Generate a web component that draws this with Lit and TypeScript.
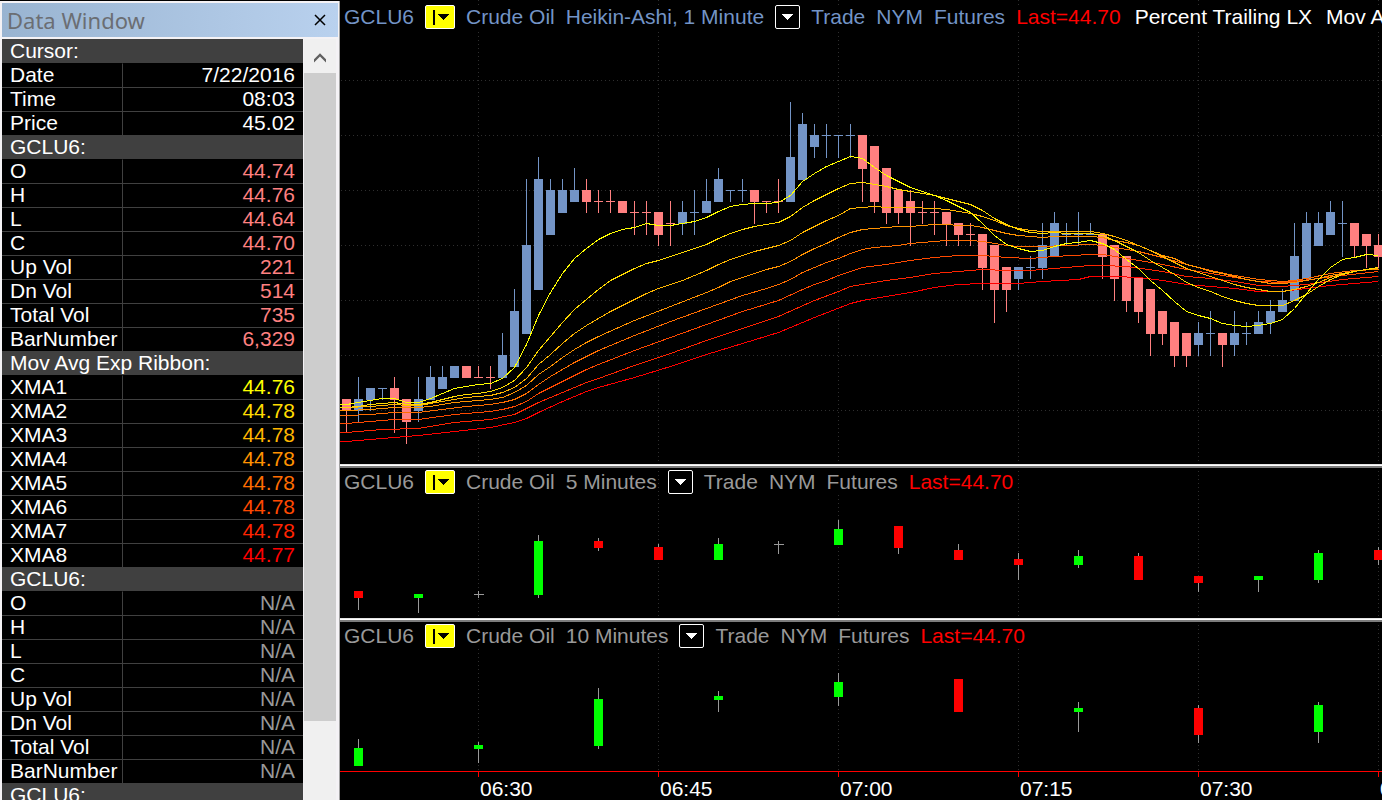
import { LitElement, html, svg, css } from "lit";
import { customElement, property } from "lit/decorators.js";

type Bar = [string, number, number, number, number];
type Point = [number, number];

const TEXT_WHITE = "#ffffff";
const SALMON = "#ff8080";
const STEEL = "#7394c6";
const RIBBON = ["#ffff00", "#ffdb00", "#ffb600", "#ff9200", "#ff6d00", "#ff4900", "#ff2400", "#ff0000"];
const GRID = "#2e2e2e";

interface Section {
  title: string;
  rows: [string, string, string][];
}

const QUOTE_FIELDS = ["O", "H", "L", "C", "Up Vol", "Dn Vol", "Total Vol", "BarNumber"];

const SECTIONS: Section[] = [
  {
    title: "Cursor:",
    rows: [
      ["Date", "7/22/2016", TEXT_WHITE],
      ["Time", "08:03", TEXT_WHITE],
      ["Price", "45.02", TEXT_WHITE],
    ],
  },
  {
    title: "GCLU6:",
    rows: ["44.74", "44.76", "44.64", "44.70", "221", "514", "735", "6,329"].map((v, i) => [QUOTE_FIELDS[i], v, SALMON]),
  },
  {
    title: "Mov Avg Exp Ribbon:",
    rows: ["44.76", "44.78", "44.78", "44.78", "44.78", "44.78", "44.78", "44.77"].map((v, i) => [`XMA${i + 1}`, v, RIBBON[i]]),
  },
  { title: "GCLU6:", rows: QUOTE_FIELDS.map((f) => [f, "N/A", "#999999"]) },
  { title: "GCLU6:", rows: [] },
];

/* One-minute bars: direction, high, body top, body bottom, low, in ticks below the 135px line. */
const MINUTE_BARS: Bar[] = [
  ["r", 24, 24, 25, 27], ["b", 22, 24, 25, 26], ["b", 23, 23, 24, 25], ["b", 23, 23, 23, 24], ["r", 22, 23, 24, 27],
  ["r", 24, 24, 26, 28], ["b", 22, 24, 25, 26], ["b", 21, 22, 24, 24], ["b", 21, 22, 23, 23], ["b", 21, 21, 22, 22],
  ["r", 21, 21, 22, 22], ["r", 21, 22, 22, 22], ["r", 21, 22, 22, 23], ["b", 18, 20, 22, 22], ["b", 14, 16, 21, 21],
  ["b", 4, 10, 18, 18], ["b", 2, 4, 14, 14], ["b", 4, 5, 9, 9], ["b", 4, 5, 7, 7], ["b", 3, 5, 6, 6],
  ["r", 4, 5, 6, 7], ["r", 5, 6, 6, 7], ["r", 5, 6, 6, 7], ["r", 6, 6, 7, 7], ["r", 6, 7, 7, 9],
  ["r", 6, 7, 7, 9], ["r", 7, 7, 9, 10], ["r", 6, 8, 8, 10], ["b", 6, 7, 8, 9], ["b", 5, 7, 7, 9],
  ["b", 4, 6, 7, 7], ["b", 3, 4, 6, 6], ["b", 5, 5, 5, 6], ["b", 4, 5, 5, 6], ["r", 5, 5, 6, 8],
  ["r", 6, 6, 6, 7], ["r", 4, 6, 6, 7], ["b", -3, 2, 6, 6], ["b", -2, -1, 4, 4], ["b", -1, 0, 1, 2],
  ["b", -1, 0, 0, 2], ["b", 0, 0, 0, 2], ["b", -1, 0, 0, 2], ["r", 0, 0, 3, 6], ["r", 1, 1, 6, 7],
  ["r", 3, 3, 7, 8], ["r", 5, 5, 7, 8], ["r", 5, 6, 7, 10], ["r", 6, 7, 7, 8], ["r", 6, 7, 7, 9],
  ["r", 7, 7, 8, 10], ["r", 8, 8, 9, 10], ["r", 8, 9, 9, 10], ["r", 9, 9, 12, 14], ["r", 10, 10, 14, 17],
  ["r", 12, 12, 14, 16], ["b", 12, 12, 13, 14], ["b", 11, 12, 12, 13], ["b", 8, 10, 12, 13], ["b", 7, 8, 11, 11],
  ["b", 8, 9, 9, 10], ["b", 7, 9, 9, 10], ["b", 8, 9, 9, 9], ["r", 9, 9, 11, 13], ["r", 10, 10, 13, 15],
  ["r", 11, 11, 15, 16], ["r", 13, 13, 16, 17], ["r", 14, 14, 18, 20], ["r", 16, 16, 18, 19], ["r", 17, 17, 20, 21],
  ["r", 18, 18, 20, 21], ["b", 17, 18, 19, 20], ["b", 16, 18, 18, 20], ["r", 18, 18, 19, 21], ["b", 16, 18, 19, 20],
  ["b", 17, 18, 18, 19], ["b", 16, 17, 18, 18], ["b", 15, 16, 17, 18], ["b", 14, 15, 16, 16], ["b", 8, 11, 15, 15],
  ["b", 7, 8, 13, 13], ["b", 7, 8, 10, 10], ["b", 6, 7, 9, 9], ["b", 6, 8, 8, 11], ["r", 8, 8, 10, 11],
  ["r", 9, 9, 10, 12], ["r", 9, 10, 11, 12],
];

/* Moving averages: bar index and height of each bend. */
const AVERAGES: Point[][] = [
  [[0, 404], [1, 402], [2, 400], [3, 398], [4, 398], [5, 402], [6, 402], [7, 398], [8, 393], [9, 388], [10, 386], [11, 384], [12, 383], [13, 378], [14, 367], [15, 344], [16, 315], [17, 292], [18, 273], [19, 258], [20, 248], [21, 239], [22, 233], [23, 229], [24, 227], [25, 223], [26, 225], [27, 225], [28, 223], [29, 221], [30, 217], [31, 211], [32, 206], [33, 204], [34, 203], [35, 203], [36, 202], [37, 195], [38, 181], [39, 173], [40, 166], [41, 161], [42, 156], [43, 158], [44, 167], [45, 175], [46, 181], [47, 187], [48, 191], [49, 195], [50, 200], [51, 206], [52, 212], [53, 223], [54, 235], [55, 244], [56, 248], [57, 251], [58, 250], [59, 246], [60, 243], [61, 242], [62, 240], [63, 243], [64, 249], [65, 259], [66, 268], [67, 280], [68, 290], [69, 301], [70, 311], [71, 315], [72, 318], [73, 323], [74, 325], [75, 326], [76, 325], [77, 323], [78, 319], [79, 308], [80, 293], [81, 279], [82, 267], [83, 259], [84, 257], [85, 254], [86, 255]],
  [[0, 407], [1, 406], [2, 404], [3, 403], [4, 402], [5, 404], [6, 404], [7, 402], [8, 399], [9, 396], [10, 394], [11, 393], [12, 391], [13, 387], [14, 380], [15, 367], [16, 350], [17, 336], [18, 322], [19, 309], [20, 299], [21, 289], [22, 280], [23, 274], [24, 268], [25, 263], [26, 260], [27, 256], [28, 252], [29, 248], [30, 244], [31, 238], [32, 233], [33, 229], [34, 226], [35, 224], [36, 222], [37, 216], [38, 207], [39, 200], [40, 194], [41, 188], [42, 183], [43, 182], [44, 184], [45, 186], [46, 189], [47, 191], [48, 193], [49, 195], [50, 198], [51, 201], [52, 204], [53, 210], [54, 218], [55, 224], [56, 229], [57, 232], [58, 233], [59, 232], [60, 233], [62, 233], [63, 235], [64, 240], [65, 246], [66, 252], [67, 260], [68, 267], [69, 274], [70, 282], [71, 287], [72, 291], [73, 296], [74, 300], [75, 303], [76, 305], [78, 305], [79, 300], [80, 294], [81, 286], [82, 279], [83, 274], [84, 271], [85, 269], [86, 267]],
  [[0, 407], [2, 406], [4, 404], [5, 405], [6, 405], [8, 401], [9, 399], [10, 397], [11, 396], [12, 395], [13, 392], [14, 387], [15, 378], [16, 364], [17, 354], [18, 343], [19, 333], [20, 325], [21, 318], [22, 311], [23, 305], [24, 299], [25, 293], [26, 288], [27, 284], [28, 280], [29, 275], [30, 270], [31, 264], [32, 259], [33, 255], [34, 251], [35, 248], [36, 245], [37, 240], [38, 232], [39, 226], [40, 220], [41, 215], [42, 208], [43, 207], [44, 206], [45, 207], [47, 207], [49, 208], [50, 209], [51, 211], [52, 213], [53, 216], [54, 220], [55, 225], [56, 228], [57, 230], [58, 231], [62, 231], [63, 233], [64, 236], [65, 240], [66, 245], [67, 250], [68, 256], [69, 262], [70, 268], [71, 272], [72, 276], [73, 280], [74, 284], [75, 287], [76, 289], [77, 291], [78, 291], [79, 289], [80, 286], [81, 282], [82, 277], [83, 273], [84, 271], [85, 269], [86, 268]],
  [[0, 410], [2, 409], [4, 407], [6, 407], [7, 406], [9, 402], [11, 400], [12, 399], [13, 397], [14, 392], [15, 385], [16, 374], [17, 366], [18, 357], [19, 349], [20, 342], [21, 336], [24, 320], [27, 306], [30, 292], [31, 287], [32, 281], [33, 277], [34, 273], [35, 269], [36, 266], [37, 261], [38, 254], [39, 248], [40, 243], [41, 237], [42, 232], [43, 229], [44, 228], [45, 227], [46, 226], [47, 226], [48, 225], [49, 224], [50, 224], [51, 225], [52, 225], [53, 227], [54, 230], [55, 233], [56, 235], [57, 236], [58, 237], [59, 236], [62, 236], [63, 237], [64, 240], [65, 242], [66, 245], [67, 250], [68, 255], [69, 258], [70, 264], [71, 267], [72, 271], [73, 273], [74, 276], [75, 279], [76, 281], [77, 283], [78, 283], [79, 282], [80, 280], [81, 278], [82, 275], [83, 273], [84, 271], [85, 269], [86, 269]],
  [[0, 415], [2, 414], [4, 412], [6, 412], [8, 409], [10, 406], [12, 404], [13, 402], [14, 399], [15, 393], [16, 384], [17, 376], [18, 369], [19, 362], [20, 356], [21, 350], [24, 335], [27, 321], [30, 308], [33, 295], [35, 288], [36, 284], [37, 279], [38, 272], [39, 267], [40, 262], [41, 258], [42, 253], [43, 249], [44, 247], [46, 245], [47, 243], [49, 241], [50, 240], [52, 240], [53, 241], [54, 243], [55, 245], [56, 246], [58, 246], [60, 245], [62, 244], [63, 245], [64, 247], [66, 251], [68, 257], [70, 264], [72, 270], [74, 275], [76, 279], [78, 281], [79, 280], [80, 278], [82, 273], [84, 270], [86, 269]],
  [[0, 423], [3, 420], [4, 419], [6, 419], [9, 414], [12, 411], [13, 409], [14, 406], [15, 401], [16, 393], [18, 381], [20, 369], [21, 364], [24, 350], [27, 337], [30, 324], [33, 311], [36, 300], [38, 289], [39, 284], [40, 280], [41, 275], [42, 271], [43, 267], [45, 264], [47, 260], [49, 257], [51, 255], [53, 255], [55, 257], [57, 258], [59, 256], [62, 254], [63, 254], [64, 256], [66, 260], [68, 264], [70, 269], [72, 273], [74, 277], [76, 281], [78, 282], [79, 281], [81, 278], [83, 275], [86, 271]],
  [[0, 432], [3, 429], [6, 428], [9, 422], [12, 419], [14, 414], [16, 402], [18, 392], [20, 382], [21, 378], [24, 365], [27, 353], [30, 340], [33, 328], [36, 316], [39, 300], [41, 291], [42, 286], [43, 284], [45, 280], [47, 277], [49, 273], [51, 271], [53, 269], [55, 270], [57, 270], [59, 268], [62, 265], [63, 265], [65, 266], [68, 271], [70, 276], [72, 278], [74, 281], [76, 285], [78, 286], [80, 284], [83, 279], [86, 276]],
  [[0, 441], [3, 438], [6, 435], [9, 431], [12, 427], [14, 422], [15, 418], [16, 412], [18, 401], [20, 391], [21, 387], [24, 377], [27, 366], [30, 354], [33, 343], [36, 332], [39, 317], [42, 303], [43, 300], [45, 296], [47, 292], [49, 287], [51, 284], [53, 283], [56, 283], [58, 281], [61, 279], [62, 276], [64, 276], [66, 277], [68, 280], [70, 284], [72, 286], [74, 288], [76, 291], [78, 291], [80, 288], [82, 285], [84, 283], [86, 281]],
];

/* Lower panes: direction, high, body top, body bottom, low, in pixels of the pane ("x" is a doji). */
const FIVE_BARS: Bar[] = [
  ["r", 123, 123, 130, 142], ["g", 126, 126, 130, 145], ["x", 123, 126, 127, 130], ["g", 67, 73, 127, 130],
  ["r", 70, 73, 80, 83], ["r", 76, 79, 92, 92], ["g", 70, 76, 92, 92], ["x", 73, 76, 77, 86],
  ["g", 52, 61, 77, 77], ["r", 58, 58, 80, 86], ["r", 76, 82, 92, 92], ["r", 85, 91, 97, 112],
  ["g", 82, 88, 97, 100], ["r", 85, 88, 112, 112], ["r", 108, 108, 115, 124], ["g", 108, 108, 112, 124],
  ["g", 82, 85, 112, 115], ["r", 79, 82, 92, 97],
];

const TEN_BARS: Bar[] = [
  ["g", 117, 126, 144, 144], ["g", 120, 123, 127, 141], ["g", 66, 77, 124, 127], ["g", 69, 74, 78, 90],
  ["g", 51, 60, 75, 84], ["r", 57, 57, 90, 90], ["g", 80, 86, 90, 110], ["r", 83, 86, 113, 121],
  ["g", 80, 83, 110, 121],
];

const TIMES = ["06:30", "06:45", "07:00", "07:15", "07:30", "07:45"];
const timeX = (i: number) => 138 + 180 * i;

const gridColumns = (from: number, to: number) =>
  TIMES.map((_, i) => svg`<line x1=${timeX(i) + 0.5} x2=${timeX(i) + 0.5} y1=${from} y2=${to} stroke=${GRID} stroke-dasharray="1 3"></line>`);

@customElement("data-window")
class DataWindow extends LitElement {
  static styles = css`
    :host {
      display: flex;
      flex-direction: column;
      box-sizing: border-box;
      min-height: 0;
      margin-top: 1px;
      padding: 2px 0 0 2px;
      background: #f4f2f5;
      border-right: 1px solid #a0a0a0;
      font: 21px/24px "Liberation Sans", Arial, sans-serif;
      color: #fff;
    }
    .title {
      display: flex;
      align-items: center;
      justify-content: space-between;
      flex: none;
      height: 34px;
      margin: 0 1px 2px 0;
      padding: 0 8px 0 5px;
      background: linear-gradient(90deg, #99b4d1, #b9d1ee);
    }
    h1 {
      margin: 0;
      font: 22px/32px "Noto Sans", "Segoe UI", sans-serif;
      color: #6b6e73;
    }
    button {
      display: grid;
      place-items: center;
      margin: 0;
      padding: 0;
      border: 0;
      background: none;
    }
    .close {
      width: 20px;
      height: 24px;
    }
    .body {
      display: flex;
      flex: 1;
      min-height: 0;
    }
    .list {
      flex: 1;
      overflow: hidden;
      background: #000;
    }
    table {
      width: 100%;
      border-spacing: 0;
      table-layout: fixed;
    }
    .label-col {
      width: 120px;
    }
    th,
    td {
      padding: 0 8px 2px;
      border-top: 1px solid #404040;
      font-weight: 400;
      line-height: 21px;
      text-align: left;
      white-space: nowrap;
    }
    td {
      border-left: 1px solid #404040;
      text-align: right;
    }
    .section th {
      background: #404040;
    }
    .section + tr th,
    .section + tr td {
      border-top-color: #000;
    }
    .scroll {
      display: flex;
      flex-direction: column;
      width: 32px;
      margin: 0 3px 0 1px;
      background: #f0f0f0;
    }
    .up {
      flex: none;
      height: 34px;
      padding-top: 3px;
    }
    .thumb {
      flex: 648;
      background: #cdcdcd;
    }
    .rest {
      flex: 79;
    }
  `;

  render() {
    return html`
      <div class="title">
        <h1>Data Window</h1>
        <button class="close" aria-label="Close">
          <svg width="12" height="12" viewBox="0 0 12 12"><path d="M1 1 11 11M11 1 1 11" stroke="#000" stroke-width="1.5" fill="none" /></svg>
        </button>
      </div>
      <div class="body">
        <div class="list">
          <table>
            <colgroup><col class="label-col" /><col /></colgroup>
            <tbody>
              ${SECTIONS.map(
                (s) => html`
                  <tr class="section"><th colspan="2" scope="colgroup">${s.title}</th></tr>
                  ${s.rows.map(([label, value, color]) => html`<tr><th scope="row">${label}</th><td style="color:${color}">${value}</td></tr>`)}
                `
              )}
            </tbody>
          </table>
        </div>
        <div class="scroll">
          <button class="up" aria-label="Scroll up">
            <svg width="12" height="10" viewBox="0 0 12 10"><path d="M0 6.200 6 .3 12 6.200V9.400L6 3.600 0 9.400z" fill="#606060" /></svg>
          </button>
          <div class="thumb"></div>
          <div class="rest"></div>
        </div>
      </div>
    `;
  }
}

@customElement("pane-header")
class PaneHeader extends LitElement {
  @property() interval = "";
  @property({ type: Array }) studies: string[] = [];

  static styles = css`
    :host {
      display: flex;
      gap: 11px;
      padding-left: 4px;
      height: 24px;
      font: 21px/24px "Liberation Sans", Arial, sans-serif;
      white-space: nowrap;
    }
    span,
    button {
      flex: none;
      background: #000;
    }
    button {
      display: block;
      box-sizing: border-box;
      width: 25px;
      height: 24px;
      margin: 0;
      padding: 0;
      border: 1px solid #fff;
      border-radius: 2px;
    }
    .link {
      width: 30px;
      background: #ff0;
    }
    svg {
      display: block;
    }
    .last {
      color: #f00;
    }
    .study {
      padding-left: 3px;
      color: #fff;
    }
  `;

  render() {
    return html`
      <span>GCLU6</span>
      <button class="link" aria-label="Symbol link">
        <svg width="28" height="22" shape-rendering="crispEdges"><path d="M7 4h2v15h-2zM12 8h11l-5.500 6z" fill="#000" /></svg>
      </button>
      <span>Crude Oil</span>
      <span>${this.interval}</span>
      <button aria-label="Interval">
        <svg width="23" height="22" shape-rendering="crispEdges"><path d="M6 8h11l-5.500 6z" fill="#fff" /></svg>
      </button>
      <span>Trade</span>
      <span>NYM</span>
      <span>Futures</span>
      <span class="last">Last=44.70</span>
      ${this.studies.map((s) => html`<span class="study">${s}</span>`)}
    `;
  }
}

@customElement("app-root")
class AppRoot extends LitElement {
  static styles = css`
    :host {
      display: grid;
      grid-template-columns: 340px minmax(0, 1fr);
      height: 100vh;
      overflow: hidden;
      background: #000;
    }
    .charts {
      display: grid;
      grid-template-rows: minmax(0, 1fr) 4px 150px 4px 149px 29px;
      min-height: 0;
    }
    .pane {
      display: grid;
      grid-template: minmax(0, 1fr) / minmax(0, 1fr);
      overflow: hidden;
    }
    .pane > * {
      grid-area: 1 / 1;
    }
    .pane pane-header {
      align-self: start;
      margin-top: 2px;
      color: #999;
    }
    .main pane-header {
      margin-top: 5px;
      color: #7394c6;
    }
    .splitter {
      box-sizing: border-box;
      background: #fff;
      border-top: 1px solid #e3e3e3;
      border-bottom: 2px solid #7c7c7c;
    }
    svg {
      display: block;
      width: 100%;
      height: 100%;
      shape-rendering: crispEdges;
    }
    .axis text {
      font: 21px "Liberation Sans", Arial, sans-serif;
      fill: #fff;
    }
  `;

  private minuteChart() {
    const y = (tick: number) => 135 + 11 * tick;
    return svg`
      ${gridColumns(0, 462)}
      ${[80, 135, 190, 245, 300, 355, 410].map(
        (g) => svg`<line x1="1" x2="100%" y1=${g + 0.5} y2=${g + 0.5} stroke=${GRID} stroke-dasharray="1 3"></line>`
      )}
      ${MINUTE_BARS.map(([dir, high, top, bottom, low], i) => {
        const x = 6 + 12 * i;
        return svg`<g fill=${dir === "r" ? SALMON : STEEL}>
          <rect x=${x} y=${y(high)} width="1" height=${11 * (low - high) + 1}></rect>
          <rect x=${x - 4} y=${y(top)} width="9" height=${11 * (bottom - top) + 1}></rect>
        </g>`;
      })}
      ${AVERAGES.map((_, n) => {
        const k = AVERAGES.length - 1 - n;
        const points = AVERAGES[k].map(([i, v]) => `${6.5 + 12 * i},${v + 0.5}`).join(" ");
        return svg`<polyline points=${`0,${AVERAGES[k][0][1] + 0.5} ${points}`} fill="none" stroke=${RIBBON[k]}></polyline>`;
      })}
    `;
  }

  private lowerChart(bars: Bar[], step: number) {
    return svg`
      ${gridColumns(3, 148)}
      ${bars.map(([dir, high, top, bottom, low], i) => {
        const x = 18 + step * i;
        const fill = dir === "g" ? "#00ff00" : dir === "r" ? "#ff0000" : "#999999";
        return svg`
          <rect x=${x} y=${high} width="1" height=${low - high} fill="#999999"></rect>
          <rect x=${x - 4} y=${top} width=${dir === "x" ? 10 : 9} height=${bottom - top} fill=${fill}></rect>`;
      })}
    `;
  }

  render() {
    return html`
      <data-window></data-window>
      <main class="charts">
        <section class="pane main">
          <svg>${this.minuteChart()}</svg>
          <pane-header interval="Heikin-Ashi, 1 Minute" .studies=${["Percent Trailing LX", "Mov Avg Exp Ribbon"]}></pane-header>
        </section>
        <div class="splitter"></div>
        <section class="pane">
          <svg>${this.lowerChart(FIVE_BARS, 60)}</svg>
          <pane-header interval="5 Minutes"></pane-header>
        </section>
        <div class="splitter"></div>
        <section class="pane">
          <svg>${this.lowerChart(TEN_BARS, 120)}</svg>
          <pane-header interval="10 Minutes"></pane-header>
        </section>
        <svg class="axis">
          <rect width="100%" height="1" fill="#f00"></rect>
          ${TIMES.map(
            (t, i) => svg`
              <rect x=${timeX(i)} y="1" width="1" height="5" fill="#f00"></rect>
              <text x=${timeX(i) + 2} y="25">${t}</text>`
          )}
        </svg>
      </main>
    `;
  }
}
